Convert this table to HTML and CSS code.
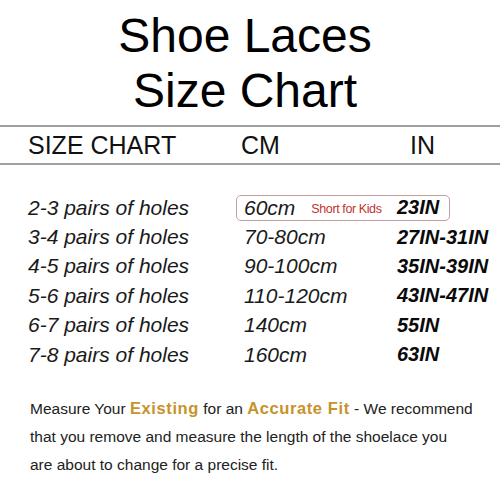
FILE: index.html
```html
<!DOCTYPE html>
<html>
<head>
<meta charset="utf-8">
<link rel="stylesheet" href="styles.css">
</head>
<body>
<div class="page">
  <h1 class="title">Shoe Laces<br>Size Chart</h1>
  <div class="head">
    <span class="h-size">SIZE CHART</span>
    <span class="h-cm">CM</span>
    <span class="h-in">IN</span>
  </div>
  <div class="rows">
    <div class="row">
      <span class="label">2-3 pairs of holes</span>
      <div class="vals hl">
        <span class="cm">60cm<span class="kids">Short for Kids</span></span>
        <span class="in">23IN</span>
      </div>
    </div>
    <div class="row">
      <span class="label">3-4 pairs of holes</span>
      <div class="vals"><span class="cm">70-80cm</span><span class="in">27IN-31IN</span></div>
    </div>
    <div class="row">
      <span class="label">4-5 pairs of holes</span>
      <div class="vals"><span class="cm">90-100cm</span><span class="in">35IN-39IN</span></div>
    </div>
    <div class="row">
      <span class="label">5-6 pairs of holes</span>
      <div class="vals"><span class="cm">110-120cm</span><span class="in">43IN-47IN</span></div>
    </div>
    <div class="row">
      <span class="label">6-7 pairs of holes</span>
      <div class="vals"><span class="cm">140cm</span><span class="in">55IN</span></div>
    </div>
    <div class="row">
      <span class="label">7-8 pairs of holes</span>
      <div class="vals"><span class="cm">160cm</span><span class="in">63IN</span></div>
    </div>
  </div>
  <p class="note">Measure Your <b class="gold">Existing</b> for an <b class="gold">Accurate Fit</b> - We recommend<br>that you remove and measure the length of the shoelace you<br>are about to change for a precise fit.</p>
</div>
</body>
</html>
```
FILE: styles.css
```css
html, body {
  margin: 0;
  padding: 0;
  background: #fff;
}
.page {
  width: 500px;
  height: 500px;
  overflow: hidden;
  font-family: "Liberation Sans", Arial, sans-serif;
  color: #111;
}
.title {
  margin: 0;
  padding: 8px 10px 0 0;
  font-size: 48px;
  line-height: 55px;
  font-weight: normal;
  text-align: center;
  color: #000;
}
.head {
  margin-top: 7px;
  border-top: 2px solid #a0a0a0;
  border-bottom: 2px solid #a0a0a0;
  height: 36px;
  display: flex;
  align-items: center;
  font-size: 25px;
  line-height: 36px;
  color: #111;
}
.h-size {
  padding-left: 28px;
  width: 213px;
}
.h-cm {
  width: 169px;
}
.rows {
  padding-top: 28px;
}
.row {
  display: flex;
  align-items: center;
  height: 29.4px;
  font-size: 21px;
  font-style: italic;
  color: #1a1a1a;
}
.label {
  padding-left: 28px;
  width: 208px;
  flex-shrink: 0;
}
.vals {
  display: flex;
  align-items: center;
  flex-shrink: 0;
  box-sizing: border-box;
  width: 214px;
  height: 26px;
  padding-left: 7px;
  border: 1px solid transparent;
  border-radius: 5px;
}
.vals.hl {
  border-color: #c59d9b;
}
.cm {
  width: 153px;
  flex-shrink: 0;
  white-space: nowrap;
}
.kids {
  font-style: normal;
  font-size: 12.5px;
  letter-spacing: -0.4px;
  color: #c0332f;
  margin-left: 16px;
  vertical-align: 2px;
}
.in {
  flex-shrink: 0;
  font-weight: bold;
  font-size: 20px;
  white-space: nowrap;
  color: #0a0a0a;
}
.note {
  margin: 25px 0 0 0;
  padding-left: 30px;
  font-size: 15.5px;
  line-height: 28px;
  color: #222;
  white-space: nowrap;
}
.gold {
  color: #c8922a;
  font-size: 16.5px;
  letter-spacing: 0.6px;
}
```
